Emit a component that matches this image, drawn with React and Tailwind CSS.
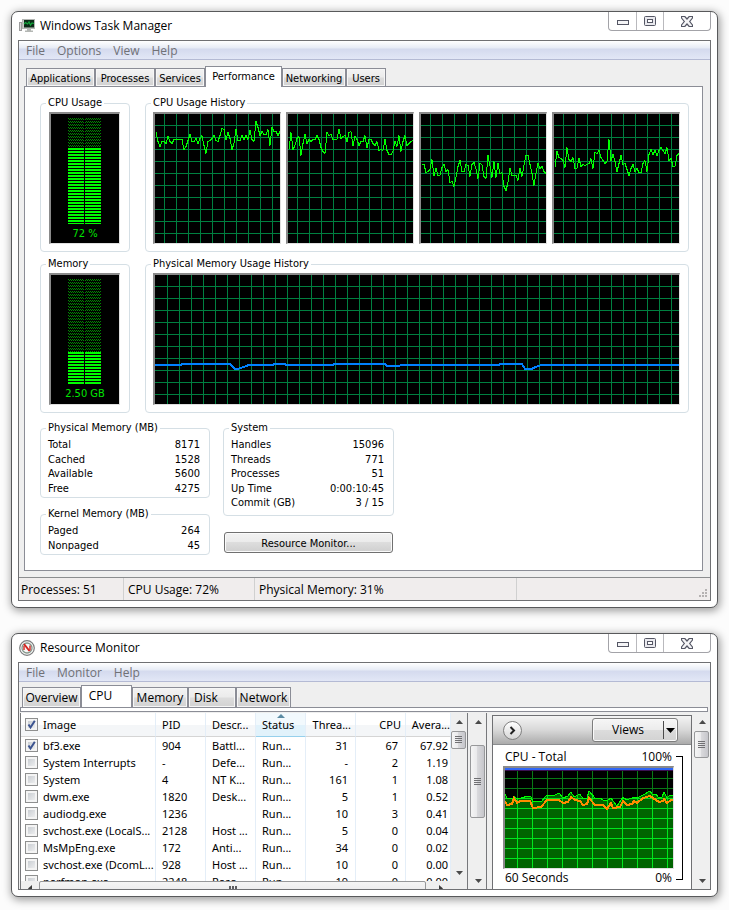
import React from "react";

const CONDENSED = "font-['DejaVu_Sans_Condensed','Liberation_Sans',sans-serif]";
const HUMANIST = "font-['Open_Sans','Noto_Sans',sans-serif]";

const CPU_HISTORY = [
  [18,27,32,27,27,29,22,27,29,25,25,25,25,25,35,32,26,20,27,27,24,29,24,21,31,39,27,26,24,21,26,27,21,14,15,25,18,24,35,29,15,26,26,21,25,21,25,16,25,27,7,13,21,17,20,20,15,31,13,17,17,21,17],
  [35,18,35,31,24,22,41,29,20,29,25,27,25,25,21,25,33,37,39,18,21,20,25,25,25,15,24,22,21,27,18,17,31,22,25,31,27,27,21,33,25,25,29,31,27,36,35,36,25,36,40,40,37,27,32,21,37,27,21,31,29,27,26],
  [50,50,58,57,55,45,61,54,61,61,53,50,57,55,68,67,72,63,52,46,57,57,50,51,62,50,48,54,64,49,50,62,64,41,51,63,47,63,49,59,58,72,76,68,54,61,61,61,66,54,62,51,41,41,50,59,71,59,49,54,52,57,59],
  [53,37,43,44,46,53,33,45,47,43,54,54,44,52,50,51,50,49,44,54,38,39,36,43,46,49,47,25,46,40,47,57,49,41,50,49,55,61,54,50,57,54,58,58,49,46,57,40,35,40,36,41,36,33,36,39,33,46,44,52,52,41,39],
];

const PROCESSES = [
  ["bf3.exe", "904", "Battl...", "Run...", "31", "67", "67.92", true],
  ["System Interrupts", "-", "Defe...", "Run...", "-", "2", "1.19", false],
  ["System", "4", "NT K...", "Run...", "161", "1", "1.08", false],
  ["dwm.exe", "1820", "Desk...", "Run...", "5", "1", "0.52", false],
  ["audiodg.exe", "1236", "", "Run...", "10", "3", "0.41", false],
  ["svchost.exe (LocalS...", "2128", "Host ...", "Run...", "5", "0", "0.04", false],
  ["MsMpEng.exe", "172", "Anti...", "Run...", "34", "0", "0.02", false],
  ["svchost.exe (DcomL...", "928", "Host ...", "Run...", "10", "0", "0.00", false],
  ["perfmon.exe", "2248", "Reso...", "Run...", "19", "0", "0.00", false],
];

function range(start, end, step) {
  const out = [];
  for (let v = start; v < end; v += step) out.push(v);
  return out;
}

function WindowButtons() {
  return (
    <div className="flex h-[19px] w-[103px] rounded-b-[4px] border border-t-0 border-[#a3a3a8]">
      <button aria-label="Minimize" className="flex w-[27px] items-center justify-center">
        <svg width="12" height="12" shapeRendering="crispEdges">
          <rect x="0.5" y="5.5" width="11" height="4" fill="#f4f4f6" stroke="#545664" />
        </svg>
      </button>
      <button aria-label="Maximize" className="flex w-[28px] items-center justify-center border-x border-[#b9b9bd]">
        <svg width="12" height="10">
          <rect x="0.5" y="0.5" width="11" height="9" rx="1" fill="#e9e9ee" stroke="#545664" />
          <rect x="3.5" y="3.5" width="5" height="3" fill="#fff" stroke="#545664" />
        </svg>
      </button>
      <button aria-label="Close" className="flex flex-1 items-center justify-center">
        <svg width="12" height="11" viewBox="0 0 12 11">
          <path d="M.5 .5H3.800L6 3 8.200 .5H11.500V2L8.700 5.500 11.500 9V10.500H8.200L6 8 3.800 10.500H.5V9L3.300 5.500 .5 2Z" fill="#f4f4f6" stroke="#545664" strokeWidth="1.200" />
        </svg>
      </button>
    </div>
  );
}

function Window({ title, icon, menus, children }) {
  return (
    <section className="rounded-[7px] border border-[#58595b] bg-white px-1.5 pb-1.5 shadow-[1px_2px_8px_1px_rgba(0,0,0,0.38)]">
      <header className="flex h-7 justify-between">
        <div className="flex items-center gap-[5px] pl-px">
          {icon}
          <h1 className={`${HUMANIST} text-[12px] leading-4 text-black`}>{title}</h1>
        </div>
        <WindowButtons />
      </header>
      <div className="border border-[#6f7073] bg-[#efefef]">
        <nav className={`${HUMANIST} flex h-[19px] items-center gap-3 border-b border-[#b4bad4] bg-[linear-gradient(to_bottom,#ffffff_0,#e6ebf5_7px,#d4daee_8px,#e2e7f6_18px)] pt-0.5 pl-[7px] text-[12px] leading-4 text-[#707176]`}>
          {menus.map((m) => (
            <button key={m}>{m}</button>
          ))}
        </nav>
        {children}
      </div>
    </section>
  );
}

function Tab({ label, width, selected, className = "" }) {
  return (
    <button
      role="tab"
      aria-selected={!!selected}
      className={`${width} ${className} border border-b-0 border-[#8b8d96] whitespace-nowrap text-black ${
        selected ? "bg-white" : "bg-[linear-gradient(to_bottom,#f3f3f3,#ececec_45%,#dcdcdc_55%,#d2d2d2)] shadow-[inset_0_0_0_1px_#f6f6f6]"
      }`}
    >
      {label}
    </button>
  );
}

function Group({ title, className = "", children }) {
  return (
    <fieldset className={`min-w-0 rounded-[4px] border border-[#d5dfe5] pt-0.5 pr-2 pl-[7px] ${className}`}>
      <legend className="-ml-0.5 px-0.5 text-[11px] leading-[14px]">{title}</legend>
      {children}
    </fieldset>
  );
}

const SUNKEN = "border-t-2 border-r border-b border-l-2 border-t-[#8a8a8a] border-r-[#e0e0e0] border-b-[#e0e0e0] border-l-[#8a8a8a] bg-black";

function Meter({ id, label, height, lit }) {
  return (
    <div className={`${SUNKEN} mx-px flex h-[132px] flex-col items-center pt-1`}>
      <svg width="34" height={height} shapeRendering="crispEdges">
        <defs>
          <pattern id={`${id}-dim`} width="2" height="3" patternUnits="userSpaceOnUse">
            <rect width="1" height="1" fill="#008a00" />
            <rect x="1" y="1" width="1" height="1" fill="#008a00" />
          </pattern>
          <pattern id={`${id}-lit`} width="33" height="3" y={lit % 3} patternUnits="userSpaceOnUse">
            <rect width="33" height="2" fill="#00ff00" />
          </pattern>
        </defs>
        {[0, 17].map((x) => (
          <g key={x}>
            <rect x={x} width="16" height={lit} fill={`url(#${id}-dim)`} />
            <rect x={x} y={lit} width="16" height={height - lit} fill={`url(#${id}-lit)`} />
          </g>
        ))}
      </svg>
      <span className="mt-[3px] text-[11px] leading-[14px] text-[#00e600]">{label}</span>
    </div>
  );
}

function Graph({ width, offset, children }) {
  return (
    <div className={`${SUNKEN} h-[132px] min-w-0 flex-1`}>
      <svg className="block h-full w-full" viewBox={`0 0 ${width} 129`} preserveAspectRatio="none" shapeRendering="crispEdges">
        {range(offset, width, 12).map((x) => (
          <path key={`v${x}`} d={`M${x + 0.5} 0V129`} stroke="#008040" />
        ))}
        {range(11, 129, 12).map((y) => (
          <path key={`h${y}`} d={`M0 ${y + 0.5}H${width}`} stroke="#008040" />
        ))}
        {children}
      </svg>
    </div>
  );
}

function Stats({ rows, height }) {
  return (
    <dl className={`mt-px flex flex-col justify-between text-[11px] leading-[14px] ${height}`}>
      {rows.map(([k, v]) => (
        <div key={k} className="flex justify-between pr-px">
          <dt>{k}</dt>
          <dd>{v}</dd>
        </div>
      ))}
    </dl>
  );
}

function TaskManagerIcon() {
  return (
    <svg width="16" height="16" viewBox="0 0 16 16">
      <rect x="0.5" y="4.500" width="2" height="8" fill="#d8d8d8" stroke="#9c9c9c" />
      <rect x="3.500" y="1.500" width="12" height="9" fill="#c9ccc9" stroke="#b3b6b3" />
      <rect x="5" y="2" width="10" height="7.500" fill="#0c2a18" />
      <path d="M5 6 6.500 4.500 8.500 6 10 4 11.500 7 13 5 15 5.500" fill="none" stroke="#12a83b" strokeWidth="1.200" />
      <path d="M8 11h4v1.500h2V14H6v-1.500h2z" fill="#b4b7b4" />
    </svg>
  );
}

function ResourceIcon() {
  return (
    <svg width="16" height="16" viewBox="0 0 16 16">
      <circle cx="8" cy="8" r="7.300" fill="#f8f8f8" stroke="#7b7d7e" strokeWidth="1.200" />
      <circle cx="8" cy="8" r="5" fill="none" stroke="#86988d" strokeWidth="1.300" />
      <path d="M5 4 10.500 11" stroke="#d3231f" strokeWidth="2" fill="none" />
      <path d="M5 10V6M11 5.500V10.500" stroke="#d3231f" strokeWidth="1.400" fill="none" />
    </svg>
  );
}

function TaskManager() {
  return (
    <Window title="Windows Task Manager" icon={<TaskManagerIcon />} menus={["File", "Options", "View", "Help"]}>
      <div className={`${CONDENSED} text-black`}>
        <div role="tablist" className="flex h-[27px] items-end pl-[7px] text-[11px] leading-[14px]">
          <Tab label="Applications" width="w-[69px]" className="mb-px h-[18px] pt-0.5" />
          <Tab label="Processes" width="w-[60px]" className="mb-px h-[18px] pt-0.5" />
          <Tab label="Services" width="w-[50px]" className="mb-px h-[18px] pt-0.5" />
          <Tab label="Performance" width="w-[77px]" className="z-10 h-[21px]" selected />
          <Tab label="Networking" width="w-[64px]" className="mb-px h-[18px] pt-0.5" />
          <Tab label="Users" width="w-[40px]" className="mb-px h-[18px] pt-0.5" />
        </div>
        <main className="-mt-px mr-[7px] mb-1.5 ml-[5px] border border-[#8b8d96] bg-white pt-[9px] pr-[13px] pb-[15px] pl-[15px]">
          <div className="flex gap-[15px]">
            <Group title="CPU Usage" className="w-[90px] pb-[7px]">
              <Meter id="cpu" label="72 %" height={106} lit={30} />
            </Group>
            <Group title="CPU Usage History" className="flex-1 pb-[7px]">
              <div className="flex gap-[5px]">
                {CPU_HISTORY.map((series, n) => (
                  <Graph key={n} width={125} offset={9}>
                    <polyline
                      fill="none"
                      stroke="#00ff00"
                      points={series.map((y, i) => `${i * 2 + 1},${y + 0.5}`).join(" ")}
                    />
                  </Graph>
                ))}
              </div>
            </Group>
          </div>
          <div className="mt-[5px] flex gap-[15px]">
            <Group title="Memory" className="w-[90px] pb-[7px]">
              <Meter id="mem" label="2.50 GB" height={105} lit={73} />
            </Group>
            <Group title="Physical Memory Usage History" className="flex-1 pb-[7px]">
              <div className="flex">
                <Graph width={524} offset={12}>
                  <polyline
                    fill="none"
                    stroke="#0080ff"
                    strokeWidth="2"
                    points="0,90 26,90 27,89 75,89 80,94 83,94 88,92 92,91 93,90 118,90 119,89 130,89 131,90 178,90 179,89 230,89 232,91 244,91 246,90 344,90 345,89 367,89 370,94 377,94 380,92 384,91 386,90 524,90"
                  />
                </Graph>
              </div>
            </Group>
          </div>
          <div className="mt-2 flex items-start gap-[13px]">
            <div className="flex w-[170px] flex-col gap-[9px]">
              <Group title="Physical Memory (MB)" className="pb-px">
                <Stats height="h-[58px]" rows={[["Total", "8171"], ["Cached", "1528"], ["Available", "5600"], ["Free", "4275"]]} />
              </Group>
              <Group title="Kernel Memory (MB)" className="pb-px">
                <Stats height="h-[29px]" rows={[["Paged", "264"], ["Nonpaged", "45"]]} />
              </Group>
            </div>
            <div className="flex w-[171px] flex-col gap-4">
              <Group title="System" className="pb-[5px]">
                <Stats
                  height="h-[72px]"
                  rows={[["Handles", "15096"], ["Threads", "771"], ["Processes", "51"], ["Up Time", "0:00:10:45"], ["Commit (GB)", "3 / 15"]]}
                />
              </Group>
              <button className="mx-px h-[21px] rounded-[3px] border border-[#707070] bg-[linear-gradient(to_bottom,#f2f2f2,#ebebeb_48%,#dddddd_50%,#cfcfcf)] pt-0.5 text-[11px] leading-[14px] shadow-[inset_0_0_0_1px_#fafafa]">
                Resource Monitor...
              </button>
            </div>
          </div>
        </main>
      </div>
      <footer className={`${HUMANIST} flex h-[23px] items-stretch border-t border-[#8b8d8f] bg-[#f0eded] text-[12px] leading-[24px] text-black`}>
        <span className="w-[105px] border-r border-[#d0d0d0] pl-0.5">Processes: 51</span>
        <span className="w-[131px] border-r border-[#d0d0d0] pl-1">CPU Usage: 72%</span>
        <span className="w-[262px] border-r border-[#d0d0d0] pl-1">Physical Memory: 31%</span>
        <svg className="mt-auto mr-0.5 mb-0.5 ml-auto" width="9" height="9" fill="#b5b2b2" shapeRendering="crispEdges">
          {[[6, 0], [3, 3], [6, 3], [0, 6], [3, 6], [6, 6]].map(([x, y]) => (
            <rect key={`${x}-${y}`} x={x} y={y} width="2" height="2" />
          ))}
        </svg>
      </footer>
    </Window>
  );
}

function Arrow({ down, label }) {
  return (
    <button aria-label={label} className="flex h-[17px] w-full shrink-0 items-center justify-center">
      <svg width="7" height="4" viewBox="0 0 7 4">
        <path d={down ? "M0 0H7L3.500 4Z" : "M0 4H7L3.500 0Z"} fill="#4a4a4a" />
      </svg>
    </button>
  );
}

function VScroll({ thumb, className = "" }) {
  return (
    <div className={`flex w-4 shrink-0 flex-col bg-[#efefef] ${className}`}>
      <Arrow label="Scroll up" />
      <div className="flex-1">
        <div className={`${thumb} mr-px flex items-center justify-center rounded-[2px] border border-[#97989a] bg-[linear-gradient(to_right,#f5f5f5,#e9e9eb_48%,#d9d9dc_50%,#c6c6cb)]`}>
          <svg width="7" height="8" shapeRendering="crispEdges">
            <path d="M0 .5H7M0 2.500H7M0 4.500H7M0 6.500H7" stroke="#707073" />
          </svg>
        </div>
      </div>
      <Arrow down label="Scroll down" />
    </div>
  );
}

function Check({ label, checked }) {
  return (
    <label className="flex items-center gap-[5px] whitespace-nowrap">
      <span className="grid size-[13px] shrink-0">
        <input
          type="checkbox"
          defaultChecked={checked}
          className="peer col-start-1 row-start-1 size-[13px] appearance-none border border-[#8e8f8f] bg-[linear-gradient(135deg,#c0c5cb,#f6f6f6)] shadow-[inset_0_0_0_2px_#f4f4f4]"
        />
        <svg className="pointer-events-none invisible col-start-1 row-start-1 peer-checked:visible" width="13" height="13" viewBox="0 0 13 13">
          <path d="M3.500 6.500 5.500 9.500 9.800 2.800" fill="none" stroke="#3c5490" strokeWidth="2" />
        </svg>
      </span>
      {label}
    </label>
  );
}

function ProcessList() {
  const cell = "overflow-hidden whitespace-nowrap border-r border-[#e4eef8] p-0";
  const head = "border-b border-b-[#d5d5d5] bg-[linear-gradient(to_bottom,#ffffff_50%,#f4f6f8_52%)] font-normal";
  return (
    <div className="flex min-w-0 flex-1 flex-col overflow-hidden border-x border-[#77787b]">
      <div className="flex h-[168px] shrink-0 overflow-hidden">
        <div className="min-w-0 flex-1 overflow-hidden">
          <table className="w-full table-fixed border-separate border-spacing-0 bg-white font-['Noto_Sans','Open_Sans',sans-serif] text-[11px] leading-4">
            <colgroup>
              <col />
              <col className="w-[50px]" />
              <col className="w-[50px]" />
              <col className="w-[50px]" />
              <col className="w-[50px]" />
              <col className="w-[50px]" />
              <col className="w-[45px]" />
            </colgroup>
            <thead>
              <tr className="h-6">
                <th className={`${cell} ${head} pl-1 text-left`}><Check label="Image" checked /></th>
                <th className={`${cell} ${head} pl-1.5 text-left`}>PID</th>
                <th className={`${cell} ${head} pl-1.5 text-left`}>Descr...</th>
                <th className={`${cell} relative border-b border-[#96d0ec] border-b-[#96d0ec] bg-[linear-gradient(to_bottom,#f2f9fd_50%,#e1f2fb_52%)] pl-1.5 text-left font-normal`}>
                  <svg className="absolute top-px left-[21px]" width="8" height="4"><path d="M0 4H8L4 0Z" fill="#5b8ba3" /></svg>
                  Status
                </th>
                <th className={`${cell} ${head} pr-1 text-right`}>Threa...</th>
                <th className={`${cell} ${head} pr-1 text-right`}>CPU</th>
                <th className={`${cell} ${head} text-right`}>Avera...</th>
              </tr>
            </thead>
            <tbody>
              {PROCESSES.map(([name, pid, desc, status, threads, cpu, avg, on]) => (
                <tr key={name} className="h-[17px]">
                  <td className={`${cell} pl-1`}><Check label={name} checked={on} /></td>
                  <td className={`${cell} pl-1.5`}>{pid}</td>
                  <td className={`${cell} pl-1.5`}>{desc}</td>
                  <td className={`${cell} pl-1.5`}>{status}</td>
                  <td className={`${cell} pr-[7px] text-right`}>{threads}</td>
                  <td className={`${cell} pr-[7px] text-right`}>{cpu}</td>
                  <td className={`${cell} pr-0.5 text-right`}>{avg}</td>
                </tr>
              ))}
            </tbody>
          </table>
        </div>
        <VScroll thumb="mt-px h-[18px]" />
      </div>
      <div className="flex h-4 shrink-0 bg-[#efefef]">
        <button aria-label="Scroll left" className="flex w-[18px] shrink-0 items-start justify-center pt-1">
          <svg width="4" height="7"><path d="M4 0V7L0 3.500Z" fill="#3c3c3c" /></svg>
        </button>
        <div className="flex flex-1 items-start justify-center rounded-[2px] border border-[#97989a] bg-[linear-gradient(to_bottom,#f5f5f5,#e6e6e8)] pt-1">
          <svg width="8" height="8" shapeRendering="crispEdges"><path d="M.5 0V8M3.500 0V8M6.500 0V8" stroke="#5d5d60" strokeWidth="2" /></svg>
        </div>
        <button aria-label="Scroll right" className="flex w-[41px] shrink-0 items-start pt-1 pl-[13px]">
          <svg width="4" height="7"><path d="M0 0V7L4 3.500Z" fill="#3c3c3c" /></svg>
        </button>
      </div>
    </div>
  );
}

const TOTAL = "0,26 2,30 8,30 9,28 12,31 16,30 23,28 26,29 28,34 37,33 39,30 42,27 50,27 54,25 58,30 63,28 66,24 69,29 75,26 78,31 82,30 84,23 90,30 95,30 98,32 102,33 106,30 112,38 118,29 122,32 129,29 132,30 138,27 145,23 147,26 151,26 153,29 157,29 159,24 162,30 165,27 168,27";
const KERNEL = "0,33 2,37 7,36 9,30 12,35 15,33 25,33 28,40 36,39 42,32 54,32 58,35 63,34 66,29 70,32 75,33 78,37 82,36 84,30 90,37 98,37 102,41 106,35 108,40 115,39 118,33 122,37 127,36 129,33 132,35 138,30 145,28 148,30 154,34 158,33 159,31 162,35 166,32 168,32";

function TotalChart() {
  const grid = (
    <>
      {range(12, 168, 15).map((x) => <path key={`v${x}`} d={`M${x + 0.5} 0V100`} />)}
      {range(10, 100, 10).map((y) => <path key={`h${y}`} d={`M0 ${y + 0.5}H168`} />)}
    </>
  );
  return (
    <div className={`${SUNKEN} mt-px mb-px h-[103px]`}>
      <svg className="block h-full w-full" viewBox="0 0 168 100" preserveAspectRatio="none" shapeRendering="crispEdges">
        <clipPath id="total-area"><polygon points={`${TOTAL} 168,100 0,100`} /></clipPath>
        <g stroke="#087a16">{grid}</g>
        <g clipPath="url(#total-area)">
          <rect width="168" height="100" fill="#006400" />
          <g stroke="#00e61e">{grid}</g>
        </g>
        <polyline points={TOTAL} fill="none" stroke="#00ff00" />
        <polyline points={KERNEL} fill="none" stroke="#ff8c00" strokeWidth="2" />
        <rect width="168" height="2" fill="#2f66f5" />
        <rect y="2" width="168" height="1" fill="#3a1050" />
      </svg>
    </div>
  );
}

function ResourceMonitor() {
  return (
    <Window title="Resource Monitor" icon={<ResourceIcon />} menus={["File", "Monitor", "Help"]}>
      <div className={`${HUMANIST} text-[12px] leading-4 text-black`}>
        <div role="tablist" className="flex h-[25px] items-end pl-[3px]">
          <Tab label="Overview" width="w-[59px]" className="h-5" />
          <Tab label="CPU" width="w-[51px]" className="h-[22px] pr-3 pb-0.5" selected />
          <Tab label="Memory" width="w-[56px]" className="h-5" />
          <Tab label="Disk" width="w-[48px]" className="h-5 pr-3" />
          <Tab label="Network" width="w-[55px]" className="h-5" />
        </div>
        <div className="mr-0.5 ml-px h-[5px] border border-[#8b8d96] bg-white" />
        <div className="mt-px flex h-[176px] overflow-hidden pl-px">
          <ProcessList />
          <VScroll className="ml-0.5 w-[17px] border-r border-[#77787b]" thumb="mt-[15px] h-[73px]" />
          <section className="mt-0.5 ml-[5px] flex w-[200px] flex-col border border-b-0 border-[#6f7073] bg-white">
            <div className="flex h-[29px] shrink-0 items-center justify-between border-b border-[#8b8d8f] bg-[linear-gradient(to_bottom,#f4f4f4,#d8d8d8_50%,#ababab)] pr-[13px] pl-2.5">
              <button aria-label="Collapse" className="flex size-[19px] items-center justify-center rounded-full border border-[#808080] bg-[linear-gradient(to_bottom,#ffffff,#d6d6d6)]">
                <svg width="7" height="9" viewBox="0 0 7 9"><path d="M1.500 1 5 4.500 1.500 8" fill="none" stroke="#222" strokeWidth="2" /></svg>
              </button>
              <div className="flex h-6 w-[86px] items-center rounded-[3px] border border-[#7d7d7d] bg-[linear-gradient(to_bottom,#f6f6f6,#ececec_48%,#dcdcdc_50%,#d2d2d2)] shadow-[inset_0_0_0_1px_#fafafa]">
                <button className="flex-1">Views</button>
                <button aria-label="View options" className="flex h-[18px] w-3.5 items-center justify-center border-l border-[#4a4a4a]">
                  <svg width="9" height="5"><path d="M0 0H9L4.500 5Z" fill="#000" /></svg>
                </button>
              </div>
            </div>
            <div className="flex bg-white pt-1 pr-2 pl-2.5">
              <div className="min-w-0 flex-1">
                <div className="flex justify-between px-0.5"><span>CPU - Total</span><span>100%</span></div>
                <TotalChart />
                <div className="flex justify-between px-0.5"><span>60 Seconds</span><span>0%</span></div>
              </div>
              <div className="mt-[7px] ml-0.5 h-[124px] w-[7px] border border-l-0 border-black" />
            </div>
          </section>
          <VScroll className="ml-0.5" thumb="mt-px h-[27px]" />
        </div>
      </div>
    </Window>
  );
}

export default function App() {
  return (
    <div className="flex min-h-screen flex-col gap-[25px] bg-[#fcfcfc] p-[11px]">
      <TaskManager />
      <ResourceMonitor />
    </div>
  );
}
